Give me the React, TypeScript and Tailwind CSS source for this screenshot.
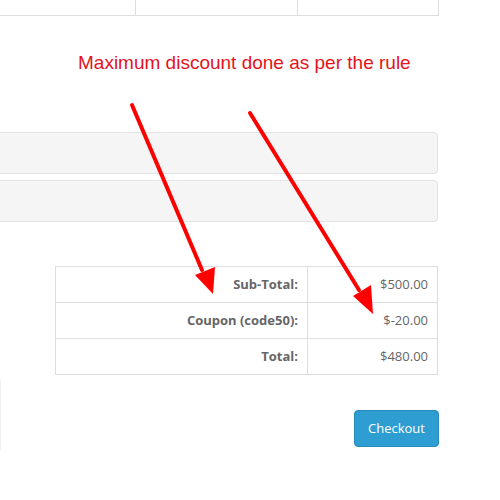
import React from 'react';

const rows = [
  { label: 'Sub-Total:', value: '$500.00' },
  { label: 'Coupon (code50):', value: '$-20.00' },
  { label: 'Total:', value: '$480.00' },
];

const Arrows: React.FC = () => (
  <svg className="absolute left-0 top-0 pointer-events-none" width="500" height="500" viewBox="0 0 500 500">
    <line x1="132" y1="105" x2="202" y2="270" stroke="#ff0000" strokeWidth="4" strokeLinecap="round" />
    <polygon points="213,294 195,275 215,267" fill="#ff0000" />
    <line x1="250" y1="113" x2="359" y2="290" stroke="#ff0000" strokeWidth="4" strokeLinecap="round" />
    <polygon points="373,314 353,296 371,285" fill="#ff0000" />
  </svg>
);

const App: React.FC = () => {
  return (
    <div className="relative w-[500px] h-[500px] overflow-hidden bg-white" style={{ fontFamily: '"Open Sans", sans-serif' }}>
      <div className="w-[439px]">
        {/* table rows cut off at top */}
        <div className="flex h-[16px] border-b border-[#dddddd]">
          <div className="w-[136px] border-r border-[#dddddd]" />
          <div className="w-[162px] border-r border-[#dddddd]" />
          <div className="flex-1 border-r border-[#dddddd]" />
        </div>

        <div className="h-[116px] pt-[35px] pl-[78px]">
          <p className="text-[19px] leading-6 text-[#e5121b]" style={{ fontFamily: '"Liberation Sans", Arial, sans-serif' }}>
            Maximum discount done as per the rule
          </p>
        </div>

        <div className="-ml-2 mr-px flex flex-col gap-[6px]">
          <div className="h-[42px] rounded border border-[#e3e3e3] bg-[#f5f5f5]" />
          <div className="h-[42px] rounded border border-[#e3e3e3] bg-[#f5f5f5]" />
        </div>

        <div className="pl-[55px] pt-[44px] pr-px">
          <table className="w-full border-collapse text-[13px] text-[#666666]">
            <tbody>
              {rows.map((row) => (
                <tr key={row.label} className="h-[36px]">
                  <td className="border border-[#dddddd] pr-[9px] text-right font-bold">{row.label}</td>
                  <td className="w-[130px] border border-[#dddddd] pr-[9px] text-right">{row.value}</td>
                </tr>
              ))}
            </tbody>
          </table>
        </div>

        <div className="flex justify-end pt-[35px]">
          <button className="h-[37px] w-[85px] rounded bg-[#2e9ed2] border border-[#2689b8] text-[13px] text-white">
            Checkout
          </button>
        </div>
      </div>

      <div className="absolute left-0 top-[380px] h-[70px] w-px bg-[#f0f0f0]" />
      <Arrows />
    </div>
  );
};

export default App;
